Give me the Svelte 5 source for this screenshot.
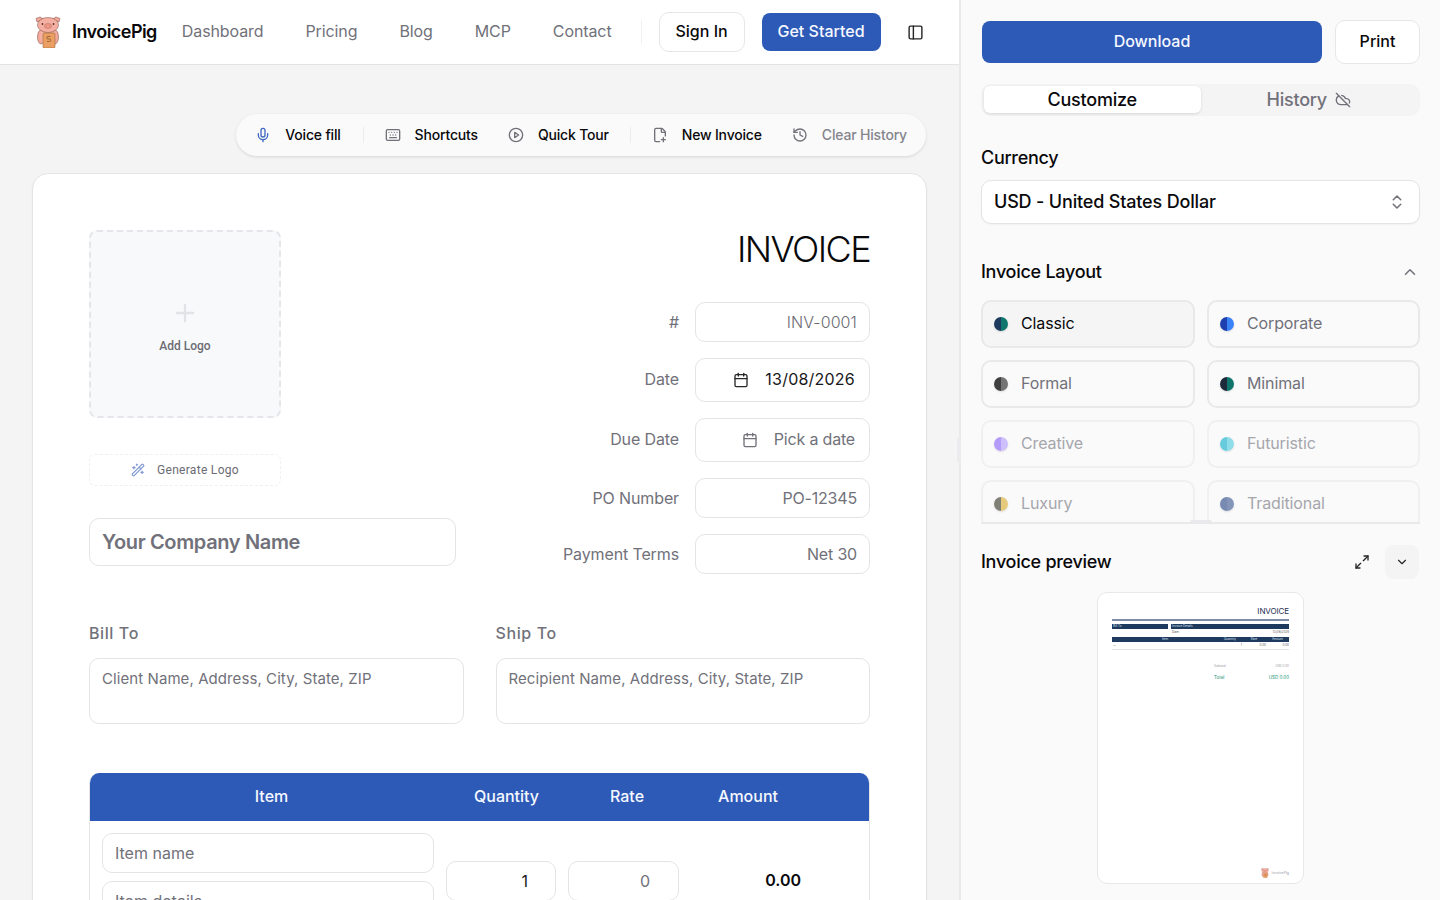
<script>
    const icons = {
        mic: '<path d="M12 2a3 3 0 0 0-3 3v7a3 3 0 0 0 6 0V5a3 3 0 0 0-3-3Z"/><path d="M19 10v2a7 7 0 0 1-14 0v-2"/><line x1="12" x2="12" y1="19" y2="22"/>',
        keyboard: '<path d="M10 8h.01"/><path d="M12 12h.01"/><path d="M14 8h.01"/><path d="M16 12h.01"/><path d="M18 8h.01"/><path d="M6 8h.01"/><path d="M7 16h10"/><path d="M8 12h.01"/><rect width="20" height="16" x="2" y="4" rx="2"/>',
        play: '<circle cx="12" cy="12" r="10"/><polygon points="10 8 16 12 10 16 10 8"/>',
        filePlus: '<path d="M11.35 22H6a2 2 0 0 1-2-2V4a2 2 0 0 1 2-2h8a2.4 2.4 0 0 1 1.706.706l3.588 3.588A2.4 2.4 0 0 1 20 8v5.35"/><path d="M14 2v5a1 1 0 0 0 1 1h5"/><path d="M14 19h6"/><path d="M17 16v6"/>',
        history: '<path d="M3 12a9 9 0 1 0 9-9 9.75 9.75 0 0 0-6.74 2.74L3 8"/><path d="M3 3v5h5"/><path d="M12 7v5l4 2"/>',
        wand: '<path d="m21.64 3.64-1.28-1.28a1.21 1.21 0 0 0-1.72 0L2.36 18.64a1.21 1.21 0 0 0 0 1.72l1.28 1.28a1.2 1.2 0 0 0 1.72 0L21.64 5.36a1.2 1.2 0 0 0 0-1.72"/><path d="m14 7 3 3"/><path d="M5 6v4"/><path d="M19 14v4"/><path d="M10 2v2"/><path d="M7 8H3"/><path d="M21 16h-4"/><path d="M11 3H9"/>',
        calendar: '<path d="M8 2v4"/><path d="M16 2v4"/><rect width="18" height="18" x="3" y="4" rx="2"/><path d="M3 10h18"/>',
        updown: '<path d="m7 15 5 5 5-5"/><path d="m7 9 5-5 5 5"/>',
        up: '<path d="m18 15-6-6-6 6"/>',
        down: '<path d="m6 9 6 6 6-6"/>',
        cloudOff: '<path d="m2 2 20 20"/><path d="M5.782 5.782A7 7 0 0 0 9 19h8.5a4.5 4.5 0 0 0 1.307-.193"/><path d="M21.532 16.5A4.5 4.5 0 0 0 17.5 10h-1.79A7.008 7.008 0 0 0 10 5.07"/>',
        expand: '<path d="M15 3h6v6"/><path d="m21 3-7 7"/><path d="m3 21 7-7"/><path d="M9 21H3v-6"/>',
        panel: '<rect width="18" height="18" x="3" y="3" rx="2"/><path d="M9 3v18"/>',
        plus: '<path d="M5 12h14"/><path d="M12 5v14"/>'
    };

    const navLinks = ['Dashboard', 'Pricing', 'Blog', 'MCP', 'Contact'];

    const layouts = [
        { name: 'Classic', a: '#1e3a5f', b: '#0f766e', active: true },
        { name: 'Corporate', a: '#1e40af', b: '#3b82f6' },
        { name: 'Formal', a: '#3f3f3f', b: '#737373' },
        { name: 'Minimal', a: '#1e293b', b: '#0f766e' },
        { name: 'Creative', a: '#a78bfa', b: '#c4b5fd', faded: true },
        { name: 'Futuristic', a: '#4fc3d9', b: '#7dd8e6', faded: true },
        { name: 'Luxury', a: '#6b6b5f', b: '#e3c265', faded: true },
        { name: 'Traditional', a: '#5f77a6', b: '#6f84ae', faded: true }
    ];
</script>

{#snippet icon(name, size = 16, cls = '')}
    <svg class={cls} width={size} height={size} viewBox="0 0 24 24" fill="none" stroke="currentColor" stroke-width="2" stroke-linecap="round" stroke-linejoin="round">{@html icons[name]}</svg>
{/snippet}

{#snippet pig(size)}
    <svg width={size} height={size * 1.23} viewBox="0 0 26 32">
        <path d="M2 6 1 2.500 5 1 8.500 3zM24 6l1-3.500L21 1l-3.500 2z" fill="#f3a99c" stroke="#8a5a4e" stroke-width=".6" stroke-linejoin="round"/>
        <ellipse cx="6" cy="21" rx="3.500" ry="7" fill="#f3a99c" stroke="#8a5a4e" stroke-width=".6"/>
        <ellipse cx="20" cy="21" rx="3.500" ry="7" fill="#f3a99c" stroke="#8a5a4e" stroke-width=".6"/>
        <ellipse cx="13" cy="20" rx="8" ry="9" fill="#f6b3a6"/>
        <ellipse cx="13" cy="9" rx="10.500" ry="7.500" fill="#f6b0a3" stroke="#8a5a4e" stroke-width=".6"/>
        <ellipse cx="13" cy="10" rx="3.500" ry="2.500" fill="#ee9686" stroke="#a86a5c" stroke-width=".5"/>
        <circle cx="7.500" cy="8" r=".9" fill="#4a332c"/>
        <circle cx="18.500" cy="8" r=".9" fill="#4a332c"/>
        <rect x="8" y="17" width="12" height="15" rx="1" fill="#eb9f62" stroke="#a06a3a" stroke-width=".6"/>
        <path d="M15.500 20.500h-2.500a1 1 0 0 0 0 2.500h1.500a1 1 0 0 1 0 2.500H12" fill="none" stroke="#7a4f28" stroke-width=".7"/>
    </svg>
{/snippet}

<div class="app">
    <div class="left">
        <header class="topbar">
            <div class="brand">
                {@render pig(26)}
                <span class="brand-name">InvoicePig</span>
            </div>
            <nav class="nav">
                {#each navLinks as link}
                    <span>{link}</span>
                {/each}
            </nav>
            <span class="nav-sep"></span>
            <button class="btn-outline signin">Sign In</button>
            <button class="btn-primary started">Get Started</button>
            <span class="panel-toggle">{@render icon('panel', 17)}</span>
        </header>

        <main class="main">
            <div class="toolbar">
                <span class="tool first"><span class="mic">{@render icon('mic')}</span>Voice fill</span>
                <span class="tool-sep"></span>
                <span class="tool"><span class="tool-icon">{@render icon('keyboard')}</span>Shortcuts</span>
                <span class="tool"><span class="tool-icon">{@render icon('play')}</span>Quick Tour</span>
                <span class="tool-sep"></span>
                <span class="tool"><span class="tool-icon">{@render icon('filePlus')}</span>New Invoice</span>
                <span class="tool muted"><span class="tool-icon">{@render icon('history')}</span>Clear History</span>
            </div>

            <section class="card">
                <div class="top-row">
                    <div class="company">
                        <div class="logo-box">
                            <span class="logo-plus">{@render icon('plus', 28)}</span>
                            <span>Add Logo</span>
                        </div>
                        <div class="gen-logo">
                            <span class="wand">{@render icon('wand', 14)}</span>
                            <span>Generate Logo</span>
                        </div>
                        <input class="field company-name" placeholder="Your Company Name" />
                    </div>
                    <div class="meta">
                        <h1>INVOICE</h1>
                        <div class="meta-row">
                            <label for="inv">#</label>
                            <input id="inv" class="field right h40 light" placeholder="INV-0001" />
                        </div>
                        <div class="meta-row">
                            <span class="lbl">Date</span>
                            <div class="field date h44">{@render icon('calendar', 16)}<span>13/08/2026</span></div>
                        </div>
                        <div class="meta-row">
                            <span class="lbl">Due Date</span>
                            <div class="field date h44 empty">{@render icon('calendar', 16)}<span>Pick a date</span></div>
                        </div>
                        <div class="meta-row">
                            <label for="po">PO Number</label>
                            <input id="po" class="field right h40" placeholder="PO-12345" />
                        </div>
                        <div class="meta-row">
                            <label for="terms">Payment Terms</label>
                            <input id="terms" class="field right h40" placeholder="Net 30" />
                        </div>
                    </div>
                </div>

                <div class="addresses">
                    <div class="addr">
                        <label for="bill">Bill To</label>
                        <textarea id="bill" class="field" placeholder="Client Name, Address, City, State, ZIP"></textarea>
                    </div>
                    <div class="addr">
                        <label for="ship">Ship To</label>
                        <textarea id="ship" class="field" placeholder="Recipient Name, Address, City, State, ZIP"></textarea>
                    </div>
                </div>

                <div class="items">
                    <div class="items-head">
                        <span>Item</span>
                        <span>Quantity</span>
                        <span>Rate</span>
                        <span>Amount</span>
                    </div>
                    <div class="item-row">
                        <div class="item-desc">
                            <input class="field h40" placeholder="Item name" />
                            <input class="field h40" placeholder="Item details" />
                        </div>
                        <input class="field h40 right num dark" value="1" />
                        <input class="field h40 right num" placeholder="0" />
                        <span class="amount">0.00</span>
                    </div>
                </div>
            </section>
        </main>
    </div>

    <aside class="side">
        <span class="drag-pill"></span>
        <div class="actions">
            <button class="btn-primary download">Download</button>
            <button class="btn-outline print">Print</button>
        </div>

        <div class="tabs">
            <span class="tab active">Customize</span>
            <span class="tab">History {@render icon('cloudOff', 16)}</span>
        </div>

        <div class="side-label">Currency</div>
        <div class="select">
            <span>USD - United States Dollar</span>
            <span class="select-icon">{@render icon('updown', 18)}</span>
        </div>

        <div class="section-head">
            <span>Invoice Layout</span>
            <span class="chev">{@render icon('up', 18)}</span>
        </div>
        <div class="layouts">
            {#each layouts as l}
                <div class="layout" class:active={l.active} class:faded={l.faded}>
                    <span class="dot" style="background: linear-gradient(90deg, {l.a} 50%, {l.b} 50%)"></span>
                    <span>{l.name}</span>
                </div>
            {/each}
            <span class="grid-handle"></span>
        </div>

        <div class="preview-head">
            <span>Invoice preview</span>
            <span class="preview-tools">
                <span class="expand">{@render icon('expand', 16)}</span>
                <span class="collapse">{@render icon('down', 14)}</span>
            </span>
        </div>

        <div class="sheet">
            <div class="s-title">INVOICE</div>
            <div class="s-rule"></div>
            <div class="s-bars">
                <div class="s-bill">Bill To</div>
                <div class="s-details">
                    <div class="s-bar">Invoice Details</div>
                    <div class="s-date"><span>Date:</span><span>13/08/2026</span></div>
                </div>
            </div>
            <div class="s-thead">
                <span>Item</span><span>Quantity</span><span>Rate</span><span>Amount</span>
            </div>
            <div class="s-trow">
                <span>—</span><span>1</span><span>0.00</span><span>0.00</span>
            </div>
            <div class="s-total sub"><span>Subtotal</span><span>USD 0.00</span></div>
            <div class="s-total grand"><span>Total</span><span>USD 0.00</span></div>
            <div class="s-foot">
                {@render pig(8)}
                <span>InvoicePig</span>
            </div>
        </div>
    </aside>
</div>

<style>
    :global(body) {
        overflow: hidden;
        background: #f4f4f5;
    }

    .app {
        display: flex;
        width: 1440px;
        height: 900px;
        overflow: hidden;
        font-family: Inter, "Liberation Sans", sans-serif;
        color: #09090b;
    }

    button {
        font-family: inherit;
        font-weight: 500;
        font-size: 16px;
        padding: 0 0 2px;
        cursor: pointer;
    }

    .btn-primary {
        background: #2e5ab7;
        color: #f5f8ff;
        border: 0;
        border-radius: 8px;
    }

    .btn-outline {
        background: #fff;
        color: #09090b;
        border: 1px solid #e7e7e9;
        border-radius: 10px;
    }

    /* left pane */
    .left {
        width: 959px;
        flex: none;
        display: flex;
        flex-direction: column;
        background: #f4f4f5;
    }

    .topbar {
        height: 64px;
        flex: none;
        display: flex;
        align-items: center;
        padding-left: 35px;
        background: #fff;
        border-bottom: 1px solid #e4e4e7;
    }

    .brand {
        display: flex;
        align-items: center;
        gap: 11px;
    }

    .brand-name {
        font-size: 18px;
        font-weight: 600;
        letter-spacing: -0.55px;
        padding-bottom: 2px;
    }

    .nav {
        display: flex;
        gap: 42px;
        margin-left: 25px;
        padding-bottom: 2px;
        font-size: 16px;
        letter-spacing: -0.1px;
        color: #71717a;
    }

    .nav-sep {
        width: 1px;
        height: 24px;
        margin: 0 17px 0 29px;
        background: #f0f0f1;
    }

    .signin {
        width: 86px;
        height: 40px;
    }

    .started {
        width: 119px;
        height: 38px;
        margin-left: 17px;
    }

    .panel-toggle {
        display: flex;
        margin-left: 26px;
        color: #27272a;
    }

    .main {
        padding: 49px 32px 0 32px;
        display: flex;
        flex-direction: column;
    }

    .toolbar {
        align-self: flex-end;
        display: flex;
        align-items: center;
        height: 42px;
        box-sizing: border-box;
        margin-right: 1px;
        padding: 0 4px 1px;
        border-radius: 21px;
        background: #fafafa;
        box-shadow: 0 1px 3px rgba(0, 0, 0, 0.12);
        font-size: 14px;
        font-weight: 500;
        letter-spacing: -0.18px;
        white-space: nowrap;
    }

    .tool {
        display: flex;
        align-items: center;
        gap: 14px;
        padding: 0 15px;
    }

    .tool.first {
        padding-right: 16px;
    }

    .tool.muted {
        color: #85858d;
    }

    .tool-icon {
        display: flex;
        color: #71717a;
    }

    .mic {
        display: flex;
        color: #3f68c0;
    }

    .tool-sep {
        width: 1px;
        height: 16px;
        margin: 0 6px;
        background: #ececee;
    }

    .card {
        margin-top: 17px;
        padding: 56px;
        background: #fff;
        border: 1px solid #e4e4e7;
        border-radius: 16px;
        box-shadow: 0 1px 2px rgba(0, 0, 0, 0.05);
    }

    .top-row {
        display: flex;
        justify-content: space-between;
    }

    .company {
        width: 367px;
        display: flex;
        flex-direction: column;
    }

    .logo-box {
        width: 192px;
        height: 188px;
        box-sizing: border-box;
        display: flex;
        flex-direction: column;
        align-items: center;
        justify-content: center;
        gap: 12px;
        padding-top: 3px;
        background: #f8f9fb;
        border: 2px dashed #e4e6ea;
        border-radius: 8px;
        font-family: Roboto, sans-serif;
        font-size: 12px;
        font-weight: 500;
        color: #6b6b73;
    }

    .logo-plus {
        display: flex;
        color: #e2e3e6;
    }

    .gen-logo {
        width: 192px;
        height: 32px;
        box-sizing: border-box;
        margin-top: 36px;
        display: flex;
        align-items: center;
        justify-content: center;
        gap: 12px;
        border: 1px dashed #eff0f2;
        border-radius: 6px;
        font-family: Roboto, sans-serif;
        font-size: 12px;
        letter-spacing: 0.3px;
        color: #6b6b73;
    }

    .wand {
        display: flex;
        color: #7f97d4;
    }

    .field {
        box-sizing: border-box;
        font-family: inherit;
        font-size: 16px;
        color: #09090b;
        background: #fff;
        border: 1px solid #e4e4e7;
        border-radius: 10px;
        padding: 0 12px;
        outline: none;
    }

    .field::placeholder {
        color: #71717a;
        opacity: 1;
    }

    .company-name {
        height: 48px;
        margin-top: 32px;
        font-size: 20px;
        font-weight: 600;
        letter-spacing: -0.35px;
    }

    .meta {
        display: flex;
        flex-direction: column;
        align-items: flex-end;
        gap: 16px;
    }

    .meta h1 {
        margin: 0 0 18px;
        font-size: 36px;
        line-height: 38px;
        font-weight: 300;
        letter-spacing: -1.6px;
    }

    .meta-row {
        display: flex;
        align-items: center;
        gap: 16px;
        font-size: 16px;
        letter-spacing: -0.12px;
        color: #71717a;
    }

    .meta-row .field {
        width: 175px;
        letter-spacing: -0.18px;
    }

    .lbl {
        padding-bottom: 2px;
    }

    .h40 {
        height: 40px;
    }

    .h44 {
        height: 44px;
    }

    .right {
        text-align: right;
    }

    .meta-row .light {
        font-weight: 300;
        letter-spacing: 0.1px;
    }

    .light::placeholder {
        color: #6b6b73;
    }

    .date {
        display: flex;
        align-items: center;
        justify-content: flex-end;
        gap: 16px;
        padding-right: 14px;
        color: #27272a;
    }

    .date span {
        padding-bottom: 2px;
        color: #18181b;
    }

    .meta-row .field:not(.empty) span {
        letter-spacing: 0.22px;
    }

    .date.empty {
        color: #71717a;
    }

    .date.empty span {
        color: #71717a;
    }

    .addresses {
        display: flex;
        gap: 32px;
        margin-top: 47px;
    }

    .addr {
        flex: 1;
        display: flex;
        flex-direction: column;
        gap: 13px;
        font-size: 16px;
        font-weight: 500;
        color: #71717a;
        letter-spacing: 0.6px;
        line-height: 24px;
    }

    .addr textarea {
        height: 66px;
        padding: 8px 12px;
        resize: none;
        font-size: 15px;
        letter-spacing: 0.08px;
        font-weight: 400;
        line-height: 24px;
    }

    .items {
        margin-top: 49px;
        border: 1px solid #e4e4e7;
        border-top: 0;
        border-radius: 10px;
        overflow: hidden;
    }

    .items-head {
        height: 48px;
        padding-bottom: 2px;
        box-sizing: border-box;
        display: grid;
        grid-template-columns: 363px 107px 134px 108px;
        align-items: center;
        text-align: center;
        background: #2e5ab7;
        color: #f5f8ff;
        font-size: 16px;
        font-weight: 500;
    }

    .item-row {
        display: grid;
        grid-template-columns: 332px 110px 111px 110px;
        gap: 12px;
        align-items: center;
        padding: 12px;
    }

    .item-desc {
        display: flex;
        flex-direction: column;
        gap: 8px;
    }

    .item-desc .field {
        width: 100%;
    }

    .num {
        width: 100%;
        margin-top: 8px;
        padding-right: 28px;
    }

    .num.dark {
        padding-right: 27px;
        color: #18181b;
    }

    .amount {
        margin-top: 6px;
        text-align: right;
        font-weight: 600;
        font-size: 16px;
    }

    /* right pane */
    .side {
        position: relative;
        flex: 1;
        box-sizing: border-box;
        padding: 20px 20px 0 20px;
        background: #fafafa;
        border-left: 2px solid #e9e9eb;
    }

    .drag-pill {
        position: absolute;
        left: -4px;
        top: 437px;
        width: 4px;
        height: 26px;
        border-radius: 2px 0 0 2px;
        background: #ececee;
    }

    .actions {
        display: flex;
        align-items: center;
        gap: 13px;
    }

    .download {
        width: 340px;
        height: 42px;
        flex: none;
        margin-left: 1px;
    }

    .print {
        width: 85px;
        height: 44px;
        flex: none;
    }

    .tabs {
        display: flex;
        height: 32px;
        box-sizing: border-box;
        margin-top: 20px;
        padding: 2px 3px 3px;
        background: #f4f4f5;
        border-radius: 10px;
        font-size: 18px;
        font-weight: 500;
        letter-spacing: -0.22px;
    }

    .tab {
        flex: 1;
        display: flex;
        align-items: center;
        justify-content: center;
        gap: 8px;
        color: #71717a;
        border-radius: 6px;
    }

    .tab.active {
        background: #fff;
        color: #09090b;
        box-shadow: 0 1px 3px rgba(0, 0, 0, 0.12);
    }

    .side-label {
        margin-top: 30px;
        font-size: 18px;
        font-weight: 500;
        letter-spacing: -0.3px;
        line-height: 24px;
    }

    .select {
        height: 44px;
        box-sizing: border-box;
        margin-top: 10px;
        display: flex;
        align-items: center;
        justify-content: space-between;
        padding: 0 13px 0 12px;
        background: #fff;
        border: 1px solid #e4e4e7;
        border-radius: 10px;
        box-shadow: 0 1px 2px rgba(0, 0, 0, 0.04);
        font-size: 18px;
        font-weight: 500;
        letter-spacing: -0.17px;
    }

    .select span:first-child {
        padding-bottom: 2px;
    }

    .select-icon {
        display: flex;
        color: #71717a;
    }

    .section-head {
        margin-top: 36px;
        display: flex;
        align-items: center;
        justify-content: space-between;
        font-size: 18px;
        font-weight: 500;
        letter-spacing: -0.28px;
        line-height: 24px;
    }

    .chev {
        display: flex;
        padding-right: 1px;
        color: #71717a;
    }

    .layouts {
        position: relative;
        margin-top: 16px;
        height: 224px;
        box-sizing: border-box;
        overflow: hidden;
        display: grid;
        grid-template-columns: 214px 213px;
        grid-auto-rows: 48px;
        gap: 12px;
        border-bottom: 2px solid #e9e9eb;
    }

    .layout {
        box-sizing: border-box;
        display: flex;
        align-items: center;
        gap: 13px;
        padding: 0 11px;
        border: 2px solid #e9e9eb;
        border-radius: 10px;
        font-size: 16px;
        letter-spacing: -0.12px;
        color: #71717a;
    }

    .layout span:last-child {
        padding-bottom: 2px;
    }

    .layout.active {
        background: #f5f5f5;
        color: #09090b;
    }

    .layout.faded {
        border-color: #f0f0f1;
        color: #a6a6ad;
    }

    .dot {
        width: 14px;
        height: 14px;
        border-radius: 50%;
        box-shadow: 0 1px 2px rgba(0, 0, 0, 0.12);
    }

    .faded .dot {
        opacity: 0.85;
    }

    .grid-handle {
        position: absolute;
        left: 209px;
        bottom: 0;
        width: 22px;
        height: 2px;
        border-radius: 2px 2px 0 0;
        background: #e9e9eb;
    }

    .preview-head {
        margin-top: 21px;
        height: 34px;
        display: flex;
        align-items: center;
        justify-content: space-between;
        font-size: 18px;
        font-weight: 500;
        letter-spacing: -0.28px;
    }

    .preview-head > span:first-child {
        padding-bottom: 2px;
    }

    .preview-tools {
        display: flex;
        align-items: center;
        gap: 15px;
    }

    .expand {
        display: flex;
        color: #27272a;
    }

    .collapse {
        width: 34px;
        height: 34px;
        margin-right: 1px;
        display: flex;
        align-items: center;
        justify-content: center;
        border-radius: 8px;
        background: #f4f4f5;
        color: #27272a;
    }

    .sheet {
        position: relative;
        width: 207px;
        height: 292px;
        box-sizing: border-box;
        margin: 13px auto 0;
        padding: 13px 14px 0;
        background: #fff;
        border: 1px solid #e8e8ea;
        border-radius: 10px;
        font-size: 3px;
        color: #52525b;
    }

    .s-title {
        text-align: right;
        font-size: 8px;
        line-height: 10px;
        color: #1e3050;
        letter-spacing: -0.1px;
    }

    .s-rule {
        height: 2px;
        margin-top: 3px;
        background: #7d8da5;
    }

    .s-bars {
        display: flex;
        gap: 3px;
        margin-top: 3px;
    }

    .s-bill {
        width: 56px;
        height: 5px;
        padding-left: 1px;
        box-sizing: border-box;
        line-height: 5px;
        background: #1e3a5f;
        color: #dbe3ef;
    }

    .s-details {
        flex: 1;
    }

    .s-bar {
        height: 5px;
        padding-left: 1px;
        line-height: 5px;
        background: #1e3a5f;
        color: #dbe3ef;
    }

    .s-date {
        display: flex;
        justify-content: space-between;
        padding: 1px 0 0 1px;
        line-height: 5px;
    }

    .s-thead {
        display: grid;
        grid-template-columns: 106px 24px 24px 23px;
        height: 5px;
        margin-top: 2px;
        line-height: 5px;
        text-align: center;
        background: #1e3a5f;
        color: #dbe3ef;
    }

    .s-trow {
        display: grid;
        grid-template-columns: 106px 24px 24px 23px;
        height: 6px;
        padding-top: 1px;
        line-height: 5px;
        text-align: right;
        border-bottom: 1px solid #e4e4e7;
    }

    .s-trow span:first-child {
        text-align: left;
        padding-left: 1px;
    }

    .s-total {
        display: flex;
        justify-content: space-between;
        margin-left: 102px;
        line-height: 5px;
    }

    .s-total.sub {
        margin-top: 14px;
        color: #9a9aa2;
    }

    .s-total.grand {
        margin-top: 6px;
        font-size: 4.5px;
        color: #0f8f70;
    }

    .s-foot {
        position: absolute;
        right: 14px;
        bottom: 5px;
        display: flex;
        align-items: center;
        gap: 2px;
        font-size: 3.6px;
        color: #a1a1aa;
    }
</style>
